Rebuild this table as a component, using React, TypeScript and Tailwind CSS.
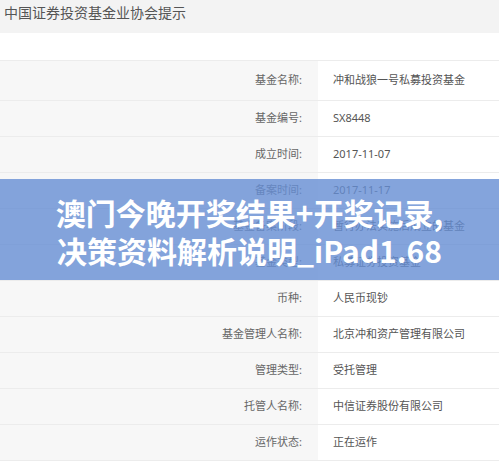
const rows: [string, string][] = [
  ['基金名称:', '冲和战狼一号私募投资基金'],
  ['基金编号:', 'SX8448'],
  ['成立时间:', '2017-11-07'],
  ['备案时间:', '2017-11-17'],
  ['基金备案阶段:', '暂行办法实施后成立的基金'],
  ['基金类型:', '私募证券投资基金'],
  ['币种:', '人民币现钞'],
  ['基金管理人名称:', '北京冲和资产管理有限公司'],
  ['管理类型:', '受托管理'],
  ['托管人名称:', '中信证券股份有限公司'],
  ['运作状态:', '正在运作'],
];

export default function App() {
  return (
    <div
      className="relative w-[499px] h-[461px] overflow-hidden bg-white"
      style={{ fontFamily: '"Noto Sans", "Noto Sans CJK SC", sans-serif' }}
    >
      <div className="h-[33px] bg-[#f3f3f3] pl-[4px] pt-[4px] text-[14px] leading-[18px] text-[#555]">
        中国证券投资基金业协会提示
      </div>
      <div className="h-[27px]" />
      <div className="border-t border-[#ececec]">
        {rows.map(([label, value], i) => (
          <div
            key={label}
            className={`flex border-b border-[#ececec] text-[11px] ${i === 0 ? 'h-[40px]' : 'h-[36px]'}`}
          >
            <div className="w-[318px] shrink-0 bg-[#f7f7f7] flex items-center justify-end pr-[16px] text-[#666]">
              {label}
            </div>
            <div className="flex-1 flex items-center pl-[15px] text-[#555]">{value}</div>
          </div>
        ))}
      </div>
      {/* banner laid over the table */}
      <div className="absolute left-0 right-0 top-[179px] h-[101px] bg-[rgba(101,141,211,0.8)] flex flex-col items-center justify-center pt-[2px]">
        <div
          className="text-white font-bold text-[30px] leading-[38px]"
          style={{ fontFamily: '"Noto Sans CJK SC", sans-serif' }}
        >
          澳门今晚开奖结果+开奖记录,
        </div>
        <div
          className="text-white font-bold text-[30px] leading-[38px]"
          style={{ fontFamily: '"Noto Sans CJK SC", sans-serif' }}
        >
          决策资料解析说明_iPad1.68
        </div>
      </div>
    </div>
  );
}
